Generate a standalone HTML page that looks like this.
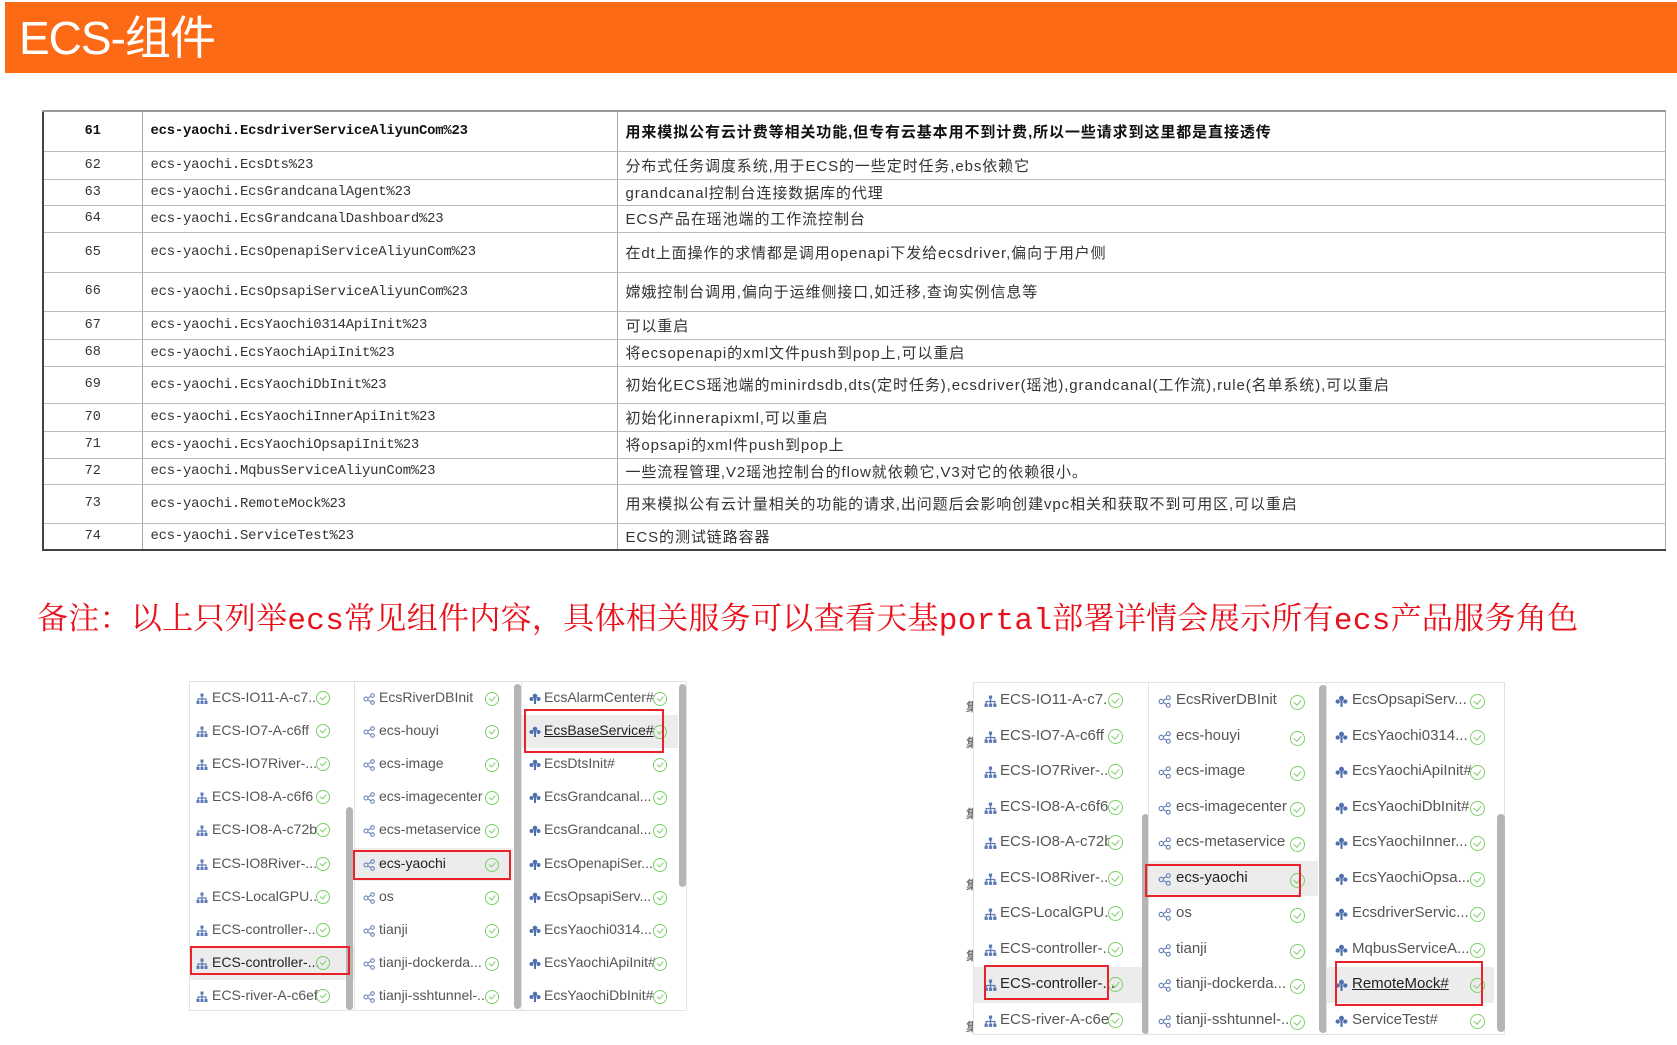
<!DOCTYPE html>
<html><head><meta charset="utf-8"><style>
*{margin:0;padding:0;box-sizing:border-box}
body{width:1677px;height:1045px;background:#fff;position:relative;overflow:hidden;font-family:"Liberation Sans","Noto Sans CJK SC",sans-serif}
.bar{position:absolute;left:5px;top:2px;width:1672px;height:71px;background:#fd6a16}
.bar span{position:absolute;left:14px;top:8px;color:#fff;font-size:46px;line-height:56px;letter-spacing:-1px}
table{position:absolute;left:42px;top:110px;width:1624px;border-collapse:collapse;border-left:2px solid #444;border-bottom:2px solid #444;border-top:2px solid #999}
td{border-bottom:1.5px solid #bbb;border-right:1px solid #aaa;font-size:15px;color:#333;white-space:nowrap;vertical-align:middle}
td.n{width:99px;text-align:center;font-family:"Liberation Mono",monospace;font-size:13.5px}
td.m{width:475px;padding-left:8px;font-family:"Liberation Mono",monospace;font-size:13.9px;letter-spacing:-0.2px}
td.d{padding-left:8px;letter-spacing:0.9px}
tr.b td{font-weight:bold;color:#111}
.note{position:absolute;left:37px;top:593px;color:#e8101a;font-size:31px;font-family:"Liberation Mono","Noto Serif CJK SC",serif;white-space:nowrap;letter-spacing:0.3px}
.panel{position:absolute;border:1.5px solid #e3e3e3;background:#fff}
.col{position:absolute;top:0;bottom:0}
.row{position:absolute;left:0;right:0;color:#555;white-space:nowrap}
.row .t{position:absolute}
.ic{position:absolute}
.ck{position:absolute;border:1.6px solid #7ccf6a;border-radius:50%;background:#fff}
.ck:after{content:"";position:absolute;left:30%;top:18%;width:28%;height:45%;border-right:1.6px solid #7ccf6a;border-bottom:1.6px solid #7ccf6a;transform:rotate(40deg)}
.sel{background:#ececec}
.sel .ck{background:transparent}
.rb{position:absolute;border:2.5px solid #e8232a}
.sb{position:absolute;width:7px;background:#b5b5b5;border-radius:4px}
</style></head><body>
<div class="bar"><span>ECS-组件</span></div>

<table>
<tr class="b" style="height:40px"><td class="n">61</td><td class="m">ecs-yaochi.EcsdriverServiceAliyunCom%23</td><td class="d">用来模拟公有云计费等相关功能,但专有云基本用不到计费,所以一些请求到这里都是直接透传</td></tr>
<tr style="height:28px"><td class="n">62</td><td class="m">ecs-yaochi.EcsDts%23</td><td class="d">分布式任务调度系统,用于ECS的一些定时任务,ebs依赖它</td></tr>
<tr style="height:26px"><td class="n">63</td><td class="m">ecs-yaochi.EcsGrandcanalAgent%23</td><td class="d">grandcanal控制台连接数据库的代理</td></tr>
<tr style="height:27px"><td class="n">64</td><td class="m">ecs-yaochi.EcsGrandcanalDashboard%23</td><td class="d">ECS产品在瑶池端的工作流控制台</td></tr>
<tr style="height:40px"><td class="n">65</td><td class="m">ecs-yaochi.EcsOpenapiServiceAliyunCom%23</td><td class="d">在dt上面操作的求情都是调用openapi下发给ecsdriver,偏向于用户侧</td></tr>
<tr style="height:39px"><td class="n">66</td><td class="m">ecs-yaochi.EcsOpsapiServiceAliyunCom%23</td><td class="d">嫦娥控制台调用,偏向于运维侧接口,如迁移,查询实例信息等</td></tr>
<tr style="height:28px"><td class="n">67</td><td class="m">ecs-yaochi.EcsYaochi0314ApiInit%23</td><td class="d">可以重启</td></tr>
<tr style="height:27px"><td class="n">68</td><td class="m">ecs-yaochi.EcsYaochiApiInit%23</td><td class="d">将ecsopenapi的xml文件push到pop上,可以重启</td></tr>
<tr style="height:37px"><td class="n">69</td><td class="m">ecs-yaochi.EcsYaochiDbInit%23</td><td class="d">初始化ECS瑶池端的minirdsdb,dts(定时任务),ecsdriver(瑶池),grandcanal(工作流),rule(名单系统),可以重启</td></tr>
<tr style="height:28px"><td class="n">70</td><td class="m">ecs-yaochi.EcsYaochiInnerApiInit%23</td><td class="d">初始化innerapixml,可以重启</td></tr>
<tr style="height:27px"><td class="n">71</td><td class="m">ecs-yaochi.EcsYaochiOpsapiInit%23</td><td class="d">将opsapi的xml件push到pop上</td></tr>
<tr style="height:26px"><td class="n">72</td><td class="m">ecs-yaochi.MqbusServiceAliyunCom%23</td><td class="d">一些流程管理,V2瑶池控制台的flow就依赖它,V3对它的依赖很小。</td></tr>
<tr style="height:39px"><td class="n">73</td><td class="m">ecs-yaochi.RemoteMock%23</td><td class="d">用来模拟公有云计量相关的功能的请求,出问题后会影响创建vpc相关和获取不到可用区,可以重启</td></tr>
<tr style="height:27px"><td class="n">74</td><td class="m">ecs-yaochi.ServiceTest%23</td><td class="d">ECS的测试链路容器</td></tr>
</table>

<div class="note">备注：以上只列举ecs常见组件内容，具体相关服务可以查看天基portal部署详情会展示所有ecs产品服务角色</div>

<svg width="0" height="0" style="position:absolute">
<defs>
<symbol id="h" viewBox="0 0 12 12"><rect x="4.5" y="0.5" width="3" height="3" fill="#5b7ab5"/><path d="M6 3.5V6M2 8V6H10V8M6 6V8" stroke="#5b7ab5" stroke-width="1.2" fill="none"/><rect x="0.5" y="8" width="3" height="3" fill="#5b7ab5"/><rect x="4.5" y="8" width="3" height="3" fill="#5b7ab5"/><rect x="8.5" y="8" width="3" height="3" fill="#5b7ab5"/></symbol>
<symbol id="s" viewBox="0 0 12 12"><circle cx="3" cy="6" r="2" stroke="#5b7ab5" fill="none"/><circle cx="9.5" cy="2.5" r="1.8" stroke="#5b7ab5" fill="none"/><circle cx="9.5" cy="9.5" r="1.8" stroke="#5b7ab5" fill="none"/><path d="M5 5L8 3.3M5 7L8 8.7" stroke="#5b7ab5"/></symbol>
<symbol id="c" viewBox="0 0 12 12"><circle cx="6" cy="3" r="2.3" fill="#4e6fae"/><circle cx="2.5" cy="6" r="2" fill="#4e6fae"/><circle cx="9.5" cy="6" r="2" fill="#4e6fae"/><rect x="5" y="5" width="2" height="6" fill="#4e6fae"/></symbol>
</defs></svg>

<!-- LEFT PANEL -->
<div class="panel" style="left:189px;top:681px;width:498px;height:330px">
 <div class="col" style="left:0;width:164px;font-size:14px">
  <div class="row" style="top:0;height:33px"><svg class="ic" style="left:6px;top:11px" width="12" height="12"><use href="#h"/></svg><span class="t" style="left:22px;top:7px">ECS-IO11-A-c7...</span><div class="ck" style="left:126px;top:9px;width:14px;height:14px"></div></div>
  <div class="row" style="top:33px;height:33px"><svg class="ic" style="left:6px;top:11px" width="12" height="12"><use href="#h"/></svg><span class="t" style="left:22px;top:7px">ECS-IO7-A-c6ff</span><div class="ck" style="left:126px;top:9px;width:14px;height:14px"></div></div>
  <div class="row" style="top:66px;height:33px"><svg class="ic" style="left:6px;top:11px" width="12" height="12"><use href="#h"/></svg><span class="t" style="left:22px;top:7px">ECS-IO7River-...</span><div class="ck" style="left:126px;top:9px;width:14px;height:14px"></div></div>
  <div class="row" style="top:99px;height:33px"><svg class="ic" style="left:6px;top:11px" width="12" height="12"><use href="#h"/></svg><span class="t" style="left:22px;top:7px">ECS-IO8-A-c6f6</span><div class="ck" style="left:126px;top:9px;width:14px;height:14px"></div></div>
  <div class="row" style="top:132px;height:33px"><svg class="ic" style="left:6px;top:11px" width="12" height="12"><use href="#h"/></svg><span class="t" style="left:22px;top:7px">ECS-IO8-A-c72b</span><div class="ck" style="left:126px;top:9px;width:14px;height:14px"></div></div>
  <div class="row" style="top:166px;height:33px"><svg class="ic" style="left:6px;top:11px" width="12" height="12"><use href="#h"/></svg><span class="t" style="left:22px;top:7px">ECS-IO8River-...</span><div class="ck" style="left:126px;top:9px;width:14px;height:14px"></div></div>
  <div class="row" style="top:199px;height:33px"><svg class="ic" style="left:6px;top:11px" width="12" height="12"><use href="#h"/></svg><span class="t" style="left:22px;top:7px">ECS-LocalGPU...</span><div class="ck" style="left:126px;top:9px;width:14px;height:14px"></div></div>
  <div class="row" style="top:232px;height:33px"><svg class="ic" style="left:6px;top:11px" width="12" height="12"><use href="#h"/></svg><span class="t" style="left:22px;top:7px">ECS-controller-...</span><div class="ck" style="left:126px;top:9px;width:14px;height:14px"></div></div>
  <div class="row sel" style="top:265px;height:33px;color:#222"><svg class="ic" style="left:6px;top:11px" width="12" height="12"><use href="#h"/></svg><span class="t" style="left:22px;top:7px">ECS-controller-...</span><div class="ck" style="left:126px;top:9px;width:14px;height:14px"></div></div>
  <div class="row" style="top:298px;height:33px"><svg class="ic" style="left:6px;top:11px" width="12" height="12"><use href="#h"/></svg><span class="t" style="left:22px;top:7px">ECS-river-A-c6ef</span><div class="ck" style="left:126px;top:9px;width:14px;height:14px"></div></div>
  <div class="sb" style="left:156px;top:125px;height:203px"></div>
 </div>
 <div class="col" style="left:164px;width:167px;font-size:14px;border-left:1px solid #e3e3e3">
  <div class="row" style="top:0;height:33px"><svg class="ic" style="left:8px;top:11px" width="12" height="12"><use href="#s"/></svg><span class="t" style="left:24px;top:7px">EcsRiverDBInit</span><div class="ck" style="left:130px;top:10px;width:14px;height:14px"></div></div>
  <div class="row" style="top:33px;height:33px"><svg class="ic" style="left:8px;top:11px" width="12" height="12"><use href="#s"/></svg><span class="t" style="left:24px;top:7px">ecs-houyi</span><div class="ck" style="left:130px;top:10px;width:14px;height:14px"></div></div>
  <div class="row" style="top:66px;height:33px"><svg class="ic" style="left:8px;top:11px" width="12" height="12"><use href="#s"/></svg><span class="t" style="left:24px;top:7px">ecs-image</span><div class="ck" style="left:130px;top:10px;width:14px;height:14px"></div></div>
  <div class="row" style="top:99px;height:33px"><svg class="ic" style="left:8px;top:11px" width="12" height="12"><use href="#s"/></svg><span class="t" style="left:24px;top:7px">ecs-imagecenter</span><div class="ck" style="left:130px;top:10px;width:14px;height:14px"></div></div>
  <div class="row" style="top:132px;height:33px"><svg class="ic" style="left:8px;top:11px" width="12" height="12"><use href="#s"/></svg><span class="t" style="left:24px;top:7px">ecs-metaservice</span><div class="ck" style="left:130px;top:10px;width:14px;height:14px"></div></div>
  <div class="row sel" style="top:166px;height:33px;color:#222;right:8px"><svg class="ic" style="left:8px;top:11px" width="12" height="12"><use href="#s"/></svg><span class="t" style="left:24px;top:7px">ecs-yaochi</span><div class="ck" style="left:130px;top:10px;width:14px;height:14px"></div></div>
  <div class="row" style="top:199px;height:33px"><svg class="ic" style="left:8px;top:11px" width="12" height="12"><use href="#s"/></svg><span class="t" style="left:24px;top:7px">os</span><div class="ck" style="left:130px;top:10px;width:14px;height:14px"></div></div>
  <div class="row" style="top:232px;height:33px"><svg class="ic" style="left:8px;top:11px" width="12" height="12"><use href="#s"/></svg><span class="t" style="left:24px;top:7px">tianji</span><div class="ck" style="left:130px;top:10px;width:14px;height:14px"></div></div>
  <div class="row" style="top:265px;height:33px"><svg class="ic" style="left:8px;top:11px" width="12" height="12"><use href="#s"/></svg><span class="t" style="left:24px;top:7px">tianji-dockerda...</span><div class="ck" style="left:130px;top:10px;width:14px;height:14px"></div></div>
  <div class="row" style="top:298px;height:33px"><svg class="ic" style="left:8px;top:11px" width="12" height="12"><use href="#s"/></svg><span class="t" style="left:24px;top:7px">tianji-sshtunnel-...</span><div class="ck" style="left:130px;top:10px;width:14px;height:14px"></div></div>
  <div class="sb" style="left:159px;top:2px;height:325px"></div>
 </div>
 <div class="col" style="left:331px;width:165px;font-size:14px;border-left:1px solid #e3e3e3">
  <div class="row" style="top:0;height:33px"><svg class="ic" style="left:7px;top:11px" width="12" height="12"><use href="#c"/></svg><span class="t" style="left:22px;top:7px">EcsAlarmCenter#</span><div class="ck" style="left:131px;top:10px;width:14px;height:14px"></div></div>
  <div class="row sel" style="top:33px;height:33px;color:#222;right:8px"><svg class="ic" style="left:7px;top:11px" width="12" height="12"><use href="#c"/></svg><span class="t" style="left:22px;top:7px;text-decoration:underline">EcsBaseService#</span><div class="ck" style="left:131px;top:10px;width:14px;height:14px"></div></div>
  <div class="row" style="top:66px;height:33px"><svg class="ic" style="left:7px;top:11px" width="12" height="12"><use href="#c"/></svg><span class="t" style="left:22px;top:7px">EcsDtsInit#</span><div class="ck" style="left:131px;top:10px;width:14px;height:14px"></div></div>
  <div class="row" style="top:99px;height:33px"><svg class="ic" style="left:7px;top:11px" width="12" height="12"><use href="#c"/></svg><span class="t" style="left:22px;top:7px">EcsGrandcanal...</span><div class="ck" style="left:131px;top:10px;width:14px;height:14px"></div></div>
  <div class="row" style="top:132px;height:33px"><svg class="ic" style="left:7px;top:11px" width="12" height="12"><use href="#c"/></svg><span class="t" style="left:22px;top:7px">EcsGrandcanal...</span><div class="ck" style="left:131px;top:10px;width:14px;height:14px"></div></div>
  <div class="row" style="top:166px;height:33px"><svg class="ic" style="left:7px;top:11px" width="12" height="12"><use href="#c"/></svg><span class="t" style="left:22px;top:7px">EcsOpenapiSer...</span><div class="ck" style="left:131px;top:10px;width:14px;height:14px"></div></div>
  <div class="row" style="top:199px;height:33px"><svg class="ic" style="left:7px;top:11px" width="12" height="12"><use href="#c"/></svg><span class="t" style="left:22px;top:7px">EcsOpsapiServ...</span><div class="ck" style="left:131px;top:10px;width:14px;height:14px"></div></div>
  <div class="row" style="top:232px;height:33px"><svg class="ic" style="left:7px;top:11px" width="12" height="12"><use href="#c"/></svg><span class="t" style="left:22px;top:7px">EcsYaochi0314...</span><div class="ck" style="left:131px;top:10px;width:14px;height:14px"></div></div>
  <div class="row" style="top:265px;height:33px"><svg class="ic" style="left:7px;top:11px" width="12" height="12"><use href="#c"/></svg><span class="t" style="left:22px;top:7px">EcsYaochiApiInit#</span><div class="ck" style="left:131px;top:10px;width:14px;height:14px"></div></div>
  <div class="row" style="top:298px;height:33px"><svg class="ic" style="left:7px;top:11px" width="12" height="12"><use href="#c"/></svg><span class="t" style="left:22px;top:7px">EcsYaochiDbInit#</span><div class="ck" style="left:131px;top:10px;width:14px;height:14px"></div></div>
  <div class="sb" style="left:157px;top:2px;height:203px"></div>
 </div>
</div>
<div class="rb" style="left:190px;top:946px;width:160px;height:29px"></div>
<div class="rb" style="left:353px;top:850px;width:158px;height:30px"></div>
<div class="rb" style="left:524px;top:709px;width:140px;height:44px"></div>

<!-- RIGHT PANEL -->
<div style="position:absolute;left:966px;top:690px;color:#777;font-size:12px;line-height:35.5px;font-weight:bold">集<br>集<br><br>集<br><br>集<br><br>集<br><br>集</div>
<div class="panel" style="left:973px;top:682px;width:532px;height:353px">
 <div class="col" style="left:0;width:174px;font-size:15px">
  <div class="row" style="top:0;height:35.5px"><svg class="ic" style="left:10px;top:12px" width="13" height="13"><use href="#h"/></svg><span class="t" style="left:26px;top:8px">ECS-IO11-A-c7...</span><div class="ck" style="left:134px;top:10px;width:15px;height:15px"></div></div>
  <div class="row" style="top:35.5px;height:35.5px"><svg class="ic" style="left:10px;top:12px" width="13" height="13"><use href="#h"/></svg><span class="t" style="left:26px;top:8px">ECS-IO7-A-c6ff</span><div class="ck" style="left:134px;top:10px;width:15px;height:15px"></div></div>
  <div class="row" style="top:71px;height:35.5px"><svg class="ic" style="left:10px;top:12px" width="13" height="13"><use href="#h"/></svg><span class="t" style="left:26px;top:8px">ECS-IO7River-...</span><div class="ck" style="left:134px;top:10px;width:15px;height:15px"></div></div>
  <div class="row" style="top:106.5px;height:35.5px"><svg class="ic" style="left:10px;top:12px" width="13" height="13"><use href="#h"/></svg><span class="t" style="left:26px;top:8px">ECS-IO8-A-c6f6</span><div class="ck" style="left:134px;top:10px;width:15px;height:15px"></div></div>
  <div class="row" style="top:142px;height:35.5px"><svg class="ic" style="left:10px;top:12px" width="13" height="13"><use href="#h"/></svg><span class="t" style="left:26px;top:8px">ECS-IO8-A-c72b</span><div class="ck" style="left:134px;top:10px;width:15px;height:15px"></div></div>
  <div class="row" style="top:177.5px;height:35.5px"><svg class="ic" style="left:10px;top:12px" width="13" height="13"><use href="#h"/></svg><span class="t" style="left:26px;top:8px">ECS-IO8River-...</span><div class="ck" style="left:134px;top:10px;width:15px;height:15px"></div></div>
  <div class="row" style="top:213px;height:35.5px"><svg class="ic" style="left:10px;top:12px" width="13" height="13"><use href="#h"/></svg><span class="t" style="left:26px;top:8px">ECS-LocalGPU...</span><div class="ck" style="left:134px;top:10px;width:15px;height:15px"></div></div>
  <div class="row" style="top:248.5px;height:35.5px"><svg class="ic" style="left:10px;top:12px" width="13" height="13"><use href="#h"/></svg><span class="t" style="left:26px;top:8px">ECS-controller-...</span><div class="ck" style="left:134px;top:10px;width:15px;height:15px"></div></div>
  <div class="row sel" style="top:284px;height:35.5px;color:#222"><svg class="ic" style="left:10px;top:12px" width="13" height="13"><use href="#h"/></svg><span class="t" style="left:26px;top:8px">ECS-controller-...</span><div class="ck" style="left:134px;top:10px;width:15px;height:15px"></div></div>
  <div class="row" style="top:319.5px;height:35.5px"><svg class="ic" style="left:10px;top:12px" width="13" height="13"><use href="#h"/></svg><span class="t" style="left:26px;top:8px">ECS-river-A-c6ef</span><div class="ck" style="left:134px;top:10px;width:15px;height:15px"></div></div>
  <div class="sb" style="left:168px;top:131px;height:220px"></div>
 </div>
 <div class="col" style="left:174px;width:178px;font-size:15px;border-left:1px solid #e3e3e3">
  <div class="row" style="top:0;height:35.5px"><svg class="ic" style="left:9px;top:12px" width="13" height="13"><use href="#s"/></svg><span class="t" style="left:27px;top:8px">EcsRiverDBInit</span><div class="ck" style="left:141px;top:12px;width:15px;height:15px"></div></div>
  <div class="row" style="top:35.5px;height:35.5px"><svg class="ic" style="left:9px;top:12px" width="13" height="13"><use href="#s"/></svg><span class="t" style="left:27px;top:8px">ecs-houyi</span><div class="ck" style="left:141px;top:12px;width:15px;height:15px"></div></div>
  <div class="row" style="top:71px;height:35.5px"><svg class="ic" style="left:9px;top:12px" width="13" height="13"><use href="#s"/></svg><span class="t" style="left:27px;top:8px">ecs-image</span><div class="ck" style="left:141px;top:12px;width:15px;height:15px"></div></div>
  <div class="row" style="top:106.5px;height:35.5px"><svg class="ic" style="left:9px;top:12px" width="13" height="13"><use href="#s"/></svg><span class="t" style="left:27px;top:8px">ecs-imagecenter</span><div class="ck" style="left:141px;top:12px;width:15px;height:15px"></div></div>
  <div class="row" style="top:142px;height:35.5px"><svg class="ic" style="left:9px;top:12px" width="13" height="13"><use href="#s"/></svg><span class="t" style="left:27px;top:8px">ecs-metaservice</span><div class="ck" style="left:141px;top:12px;width:15px;height:15px"></div></div>
  <div class="row sel" style="top:177.5px;height:35.5px;color:#222;right:8px"><svg class="ic" style="left:9px;top:12px" width="13" height="13"><use href="#s"/></svg><span class="t" style="left:27px;top:8px">ecs-yaochi</span><div class="ck" style="left:141px;top:12px;width:15px;height:15px"></div></div>
  <div class="row" style="top:213px;height:35.5px"><svg class="ic" style="left:9px;top:12px" width="13" height="13"><use href="#s"/></svg><span class="t" style="left:27px;top:8px">os</span><div class="ck" style="left:141px;top:12px;width:15px;height:15px"></div></div>
  <div class="row" style="top:248.5px;height:35.5px"><svg class="ic" style="left:9px;top:12px" width="13" height="13"><use href="#s"/></svg><span class="t" style="left:27px;top:8px">tianji</span><div class="ck" style="left:141px;top:12px;width:15px;height:15px"></div></div>
  <div class="row" style="top:284px;height:35.5px"><svg class="ic" style="left:9px;top:12px" width="13" height="13"><use href="#s"/></svg><span class="t" style="left:27px;top:8px">tianji-dockerda...</span><div class="ck" style="left:141px;top:12px;width:15px;height:15px"></div></div>
  <div class="row" style="top:319.5px;height:35.5px"><svg class="ic" style="left:9px;top:12px" width="13" height="13"><use href="#s"/></svg><span class="t" style="left:27px;top:8px">tianji-sshtunnel-...</span><div class="ck" style="left:141px;top:12px;width:15px;height:15px"></div></div>
  <div class="sb" style="left:170px;top:2px;height:348px;width:8px"></div>
 </div>
 <div class="col" style="left:352px;width:178px;font-size:15px;border-left:1px solid #e3e3e3">
  <div class="row" style="top:0;height:35.5px"><svg class="ic" style="left:8px;top:12px" width="13" height="13"><use href="#c"/></svg><span class="t" style="left:25px;top:8px">EcsOpsapiServ...</span><div class="ck" style="left:143px;top:11px;width:15px;height:15px"></div></div>
  <div class="row" style="top:35.5px;height:35.5px"><svg class="ic" style="left:8px;top:12px" width="13" height="13"><use href="#c"/></svg><span class="t" style="left:25px;top:8px">EcsYaochi0314...</span><div class="ck" style="left:143px;top:11px;width:15px;height:15px"></div></div>
  <div class="row" style="top:71px;height:35.5px"><svg class="ic" style="left:8px;top:12px" width="13" height="13"><use href="#c"/></svg><span class="t" style="left:25px;top:8px">EcsYaochiApiInit#</span><div class="ck" style="left:143px;top:11px;width:15px;height:15px"></div></div>
  <div class="row" style="top:106.5px;height:35.5px"><svg class="ic" style="left:8px;top:12px" width="13" height="13"><use href="#c"/></svg><span class="t" style="left:25px;top:8px">EcsYaochiDbInit#</span><div class="ck" style="left:143px;top:11px;width:15px;height:15px"></div></div>
  <div class="row" style="top:142px;height:35.5px"><svg class="ic" style="left:8px;top:12px" width="13" height="13"><use href="#c"/></svg><span class="t" style="left:25px;top:8px">EcsYaochiInner...</span><div class="ck" style="left:143px;top:11px;width:15px;height:15px"></div></div>
  <div class="row" style="top:177.5px;height:35.5px"><svg class="ic" style="left:8px;top:12px" width="13" height="13"><use href="#c"/></svg><span class="t" style="left:25px;top:8px">EcsYaochiOpsa...</span><div class="ck" style="left:143px;top:11px;width:15px;height:15px"></div></div>
  <div class="row" style="top:213px;height:35.5px"><svg class="ic" style="left:8px;top:12px" width="13" height="13"><use href="#c"/></svg><span class="t" style="left:25px;top:8px">EcsdriverServic...</span><div class="ck" style="left:143px;top:11px;width:15px;height:15px"></div></div>
  <div class="row" style="top:248.5px;height:35.5px"><svg class="ic" style="left:8px;top:12px" width="13" height="13"><use href="#c"/></svg><span class="t" style="left:25px;top:8px">MqbusServiceA...</span><div class="ck" style="left:143px;top:11px;width:15px;height:15px"></div></div>
  <div class="row sel" style="top:284px;height:35.5px;color:#222;right:10px"><svg class="ic" style="left:8px;top:12px" width="13" height="13"><use href="#c"/></svg><span class="t" style="left:25px;top:8px;text-decoration:underline">RemoteMock#</span><div class="ck" style="left:143px;top:11px;width:15px;height:15px"></div></div>
  <div class="row" style="top:319.5px;height:35.5px"><svg class="ic" style="left:8px;top:12px" width="13" height="13"><use href="#c"/></svg><span class="t" style="left:25px;top:8px">ServiceTest#</span><div class="ck" style="left:143px;top:11px;width:15px;height:15px"></div></div>
  <div class="sb" style="left:170px;top:131px;height:218px;width:8px"></div>
 </div>
</div>
<div class="rb" style="left:1145px;top:864px;width:156px;height:33px"></div>
<div class="rb" style="left:984px;top:965px;width:125px;height:35px"></div>
<div class="rb" style="left:1335px;top:961px;width:148px;height:45px"></div>
</body></html>
